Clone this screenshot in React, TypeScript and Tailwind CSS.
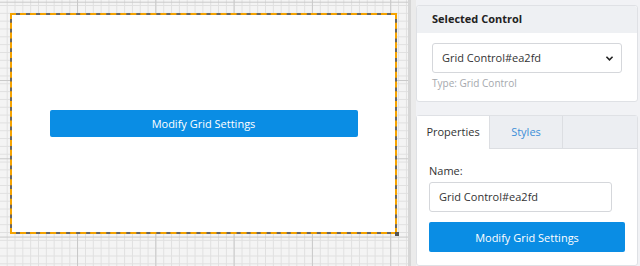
import React from "react";

export default function App() {
  return (
    <div className="flex h-[266px] w-[640px] overflow-hidden bg-[#f1f2f5] text-[#333] [font-family:'Open_Sans',sans-serif]">
      {/* Canvas area */}
      <div className="relative h-full w-[408px] shrink-0 bg-[#f4f4f4] [background-image:linear-gradient(to_right,#c9c9c9_1px,transparent_1px),linear-gradient(to_bottom,#c9c9c9_1px,transparent_1px),linear-gradient(to_right,#e0e0e0_1px,transparent_1px),linear-gradient(to_bottom,#e0e0e0_1px,transparent_1px)] [background-size:78.3px_78.3px,78.3px_78.3px,7.83px_7.83px,7.83px_7.83px] [background-position:77px_1.7px,77px_1.7px,6.7px_5px,6.7px_5px]">
        <div className="pl-[10px] pt-[13px]">
          <div className="relative h-[221px] w-[387px] border-2 border-dashed border-[#f5a300] bg-[#666]">
            <div className="flex h-full w-full items-center justify-center bg-white">
              <button className="h-[27px] w-[308px] rounded-[2px] bg-[#0a8de4] text-[11px] leading-none text-white">
                Modify Grid Settings
              </button>
            </div>
            <div className="absolute -bottom-[4px] -right-[4px] h-[4px] w-[4px] bg-[#555]" />
          </div>
        </div>
      </div>
      {/* scrollbar strip */}
      <div className="h-full w-[3px] shrink-0 bg-[#d6d6d6]" />
      <div className="h-full w-[5px] shrink-0 bg-[#ebebeb]" />
      {/* Right panel */}
      <div className="flex min-w-0 flex-1 flex-col pt-[5px]">
        <div className="w-[222px] rounded-[3px] border border-[#dfe1e5] bg-white">
          <div className="flex h-[27px] items-center rounded-t-[3px] bg-[#eef0f3] pl-[15px] text-[11px] font-bold text-[#222]">
            Selected Control
          </div>
          <div className="px-[15px] pb-[11px] pt-[10px]">
            <div className="flex h-[30px] w-[190px] items-center justify-between rounded-[3px] border border-[#d5d7db] bg-white pl-[9px] pr-[7px] text-[11px] text-[#333]">
              <span>Grid Control#ea2fd</span>
              <svg width="9" height="7" viewBox="0 0 10 8" fill="none">
                <path d="M1.5 2 L5 5.5 L8.5 2" stroke="#222" strokeWidth="1.8" />
              </svg>
            </div>
            <div className="mt-[3px] text-[10px] leading-[14px] text-[#a5a8ad]">Type: Grid Control</div>
          </div>
        </div>
        <div className="mt-[13px] w-[222px] flex-1 rounded-[3px] border border-[#dfe1e5] bg-white">
          <div className="flex h-[33px] text-[11px]">
            <div className="flex w-[72px] items-center justify-center bg-white text-[#333]">Properties</div>
            <div className="flex w-[74px] items-center justify-center border-x border-b border-[#dcdee2] bg-[#eceef2] text-[#3d8fd8]">
              Styles
            </div>
            <div className="flex-1 border-b border-[#dcdee2] bg-[#eceef2]" />
          </div>
          <div className="px-[12px] pt-[14px]">
            <div className="text-[11px] leading-[16px] text-[#333]">Name:</div>
            <div className="mt-[3px] flex h-[30px] w-[183px] items-center rounded-[3px] border border-[#d5d7db] pl-[9px] text-[11px] text-[#333]">
              Grid Control#ea2fd
            </div>
            <button className="mt-[10px] h-[30px] w-[196px] rounded-[2px] bg-[#0a8de4] text-[11px] leading-none text-white">
              Modify Grid Settings
            </button>
          </div>
        </div>
      </div>
    </div>
  );
}
